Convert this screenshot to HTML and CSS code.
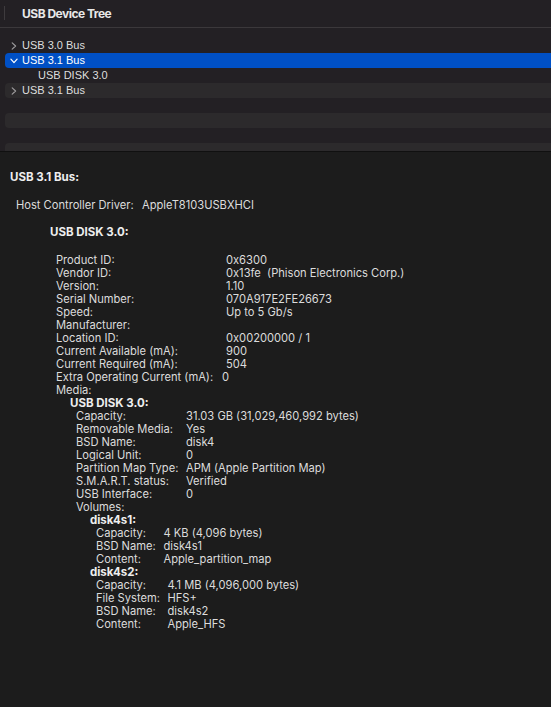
FILE: index.html
```html
<!DOCTYPE html>
<html lang="en">
<head>
<meta charset="utf-8">
<title>USB Device Tree</title>
<link rel="stylesheet" href="styles.css">
</head>
<body>
<div class="window">
  <div class="tree-pane">
    <div class="tree-header">
      <span class="col-sep"></span>
      <span class="tree-title">USB Device Tree</span>
    </div>
    <ul class="rows">
      <li class="row">
        <span class="disclosure"><svg width="6" height="8" viewBox="0 0 6 8"><path d="M1.2 0.9 L4.6 4 L1.2 7.1" fill="none" stroke="#9c9a9c" stroke-width="1.2" stroke-linecap="round" stroke-linejoin="round"/></svg></span>
        <span class="row-label">USB 3.0 Bus</span>
      </li>
      <li class="row selected">
        <span class="disclosure"><svg width="8" height="6" viewBox="0 0 8 6"><path d="M0.9 1.2 L4 4.6 L7.1 1.2" fill="none" stroke="#ffffff" stroke-width="1.2" stroke-linecap="round" stroke-linejoin="round"/></svg></span>
        <span class="row-label">USB 3.1 Bus</span>
      </li>
      <li class="row child">
        <span class="row-label">USB DISK 3.0</span>
      </li>
      <li class="row stripe">
        <span class="disclosure"><svg width="6" height="8" viewBox="0 0 6 8"><path d="M1.2 0.9 L4.6 4 L1.2 7.1" fill="none" stroke="#9c9a9c" stroke-width="1.2" stroke-linecap="round" stroke-linejoin="round"/></svg></span>
        <span class="row-label">USB 3.1 Bus</span>
      </li>
      <li class="row"></li>
      <li class="row stripe"></li>
      <li class="row"></li>
      <li class="row stripe"></li>
    </ul>
  </div>

  <div class="detail-pane">
    <div class="bus-title">USB 3.1 Bus:</div>
    <div class="host">
      <span class="host-label">Host Controller Driver:</span>
      <span class="host-value">AppleT8103USBXHCI</span>
    </div>
    <div class="device">
      <div class="dev-title">USB DISK 3.0:</div>
      <dl class="kv kv-device">
        <dt>Product ID:</dt><dd>0x6300</dd>
        <dt>Vendor ID:</dt><dd>0x13fe&nbsp; (Phison Electronics Corp.)</dd>
        <dt>Version:</dt><dd>1.10</dd>
        <dt>Serial Number:</dt><dd>070A917E2FE26673</dd>
        <dt>Speed:</dt><dd>Up to 5 Gb/s</dd>
        <dt>Manufacturer:</dt><dd></dd>
        <dt>Location ID:</dt><dd>0x00200000 / 1</dd>
        <dt>Current Available (mA):</dt><dd>900</dd>
        <dt>Current Required (mA):</dt><dd>504</dd>
        <dt>Extra Operating Current (mA):</dt><dd class="tight">0</dd>
      </dl>
      <div class="sub-label">Media:</div>
      <div class="media">
        <div class="media-title">USB DISK 3.0:</div>
        <dl class="kv kv-media">
          <dt>Capacity:</dt><dd>31.03 GB (31,029,460,992 bytes)</dd>
          <dt>Removable Media:</dt><dd>Yes</dd>
          <dt>BSD Name:</dt><dd>disk4</dd>
          <dt>Logical Unit:</dt><dd>0</dd>
          <dt>Partition Map Type:</dt><dd>APM (Apple Partition Map)</dd>
          <dt>S.M.A.R.T. status:</dt><dd>Verified</dd>
          <dt>USB Interface:</dt><dd>0</dd>
        </dl>
        <div class="sub-label">Volumes:</div>
        <div class="volumes">
          <div class="vol-title">disk4s1:</div>
          <dl class="kv kv-vol1">
            <dt>Capacity:</dt><dd>4 KB (4,096 bytes)</dd>
            <dt>BSD Name:</dt><dd>disk4s1</dd>
            <dt>Content:</dt><dd>Apple_partition_map</dd>
          </dl>
          <div class="vol-title">disk4s2:</div>
          <dl class="kv kv-vol2">
            <dt>Capacity:</dt><dd>4.1 MB (4,096,000 bytes)</dd>
            <dt>File System:</dt><dd>HFS+</dd>
            <dt>BSD Name:</dt><dd>disk4s2</dd>
            <dt>Content:</dt><dd>Apple_HFS</dd>
          </dl>
        </div>
      </div>
    </div>
  </div>
</div>
</body>
</html>
```
FILE: styles.css
```css
* { box-sizing: border-box; }

html, body {
  margin: 0;
  padding: 0;
  background: #1c1c1c;
}

body {
  font-family: Inter, "Liberation Sans", Arial, sans-serif;
  font-size: 11.15px;
  color: #dcdcdc;
}

.window {
  width: 551px;
  min-height: 707px;
  display: flex;
  flex-direction: column;
}

/* ---------- tree pane ---------- */
.tree-pane {
  height: 151px;
  background: #232024;
  overflow: hidden;
  flex: none;
}

.tree-header {
  height: 28px;
  border-bottom: 1px solid #3b383b;
  display: flex;
  align-items: center;
}

.col-sep {
  width: 1px;
  height: 14px;
  margin-left: 4px;
  margin-top: -1px;
  background: #3e3b3e;
}

.tree-title {
  margin-left: 17px;
  font-weight: 700;
  font-size: 12px;
  letter-spacing: -0.5px;
  color: #e8e8e8;
}

.rows {
  list-style: none;
  margin: 0;
  padding: 10px 0 0 5px;
}

.row {
  height: 15px;
  display: flex;
  align-items: center;
  border-radius: 4px 0 0 4px;
  color: #dedede;
  font-family: "Liberation Sans", Arial, sans-serif;
  font-size: 11px;
  line-height: 15px;
}

.row.stripe { background: #2c2a2c; }

.row.selected {
  background: #0050c5;
  color: #ffffff;
}

.row.child { padding-left: 33px; }

.disclosure {
  width: 17px;
  height: 15px;
  display: flex;
  align-items: center;
  justify-content: center;
  flex: none;
}

/* ---------- detail pane ---------- */
.detail-pane {
  flex: 1;
  border-top: 1px solid #101010;
  background: #1c1c1c;
  padding-top: 19px;
  line-height: 13px;
}

.bus-title,
.dev-title,
.media-title,
.vol-title {
  font-weight: 700;
  font-size: 11.5px;
  color: #eeeeee;
}

.bus-title {
  margin-left: 10px;
  margin-bottom: 15px;
}

.host {
  margin-left: 16px;
  margin-bottom: 14px;
  display: flex;
}

.host-label { width: 126px; flex: none; }

.device { margin-left: 50px; }

.dev-title { margin-bottom: 15px; }

.kv {
  margin: 0 0 0 6px;
  display: grid;
}

.kv dt, .kv dd {
  margin: 0;
  height: 13px;
  white-space: nowrap;
}

.kv-device { grid-template-columns: 170px 1fr; }
.kv-media  { grid-template-columns: 110px 1fr; }
.kv-vol1   { grid-template-columns: 67.5px 1fr; }
.kv-vol2   { grid-template-columns: 71.5px 1fr; }

.kv dd.tight { margin-left: -4px; }

.sub-label { margin-left: 6px; }

.media { margin-left: 20px; }

.volumes { margin-left: 20px; }
```
